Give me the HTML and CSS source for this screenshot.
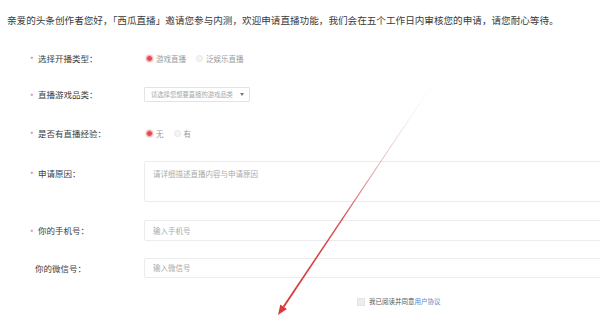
FILE: index.html
```html
<!DOCTYPE html>
<html lang="zh">
<head>
<meta charset="utf-8">
<link rel="stylesheet" href="styles.css">
</head>
<body>
<div class="page">
  <p class="intro">亲爱的头条创作者您好，「西瓜直播」邀请您参与内测，欢迎申请直播功能，我们会在五个工作日内审核您的申请，请您耐心等待。</p>
  <div class="form">
    <div class="row r1">
      <div class="label"><span class="req">*</span>选择开播类型：</div>
      <div class="field radios">
        <span class="radio on"></span><span class="opt">游戏直播</span>
        <span class="radio"></span><span class="opt">泛娱乐直播</span>
      </div>
    </div>
    <div class="row r2">
      <div class="label"><span class="req">*</span>直播游戏品类：</div>
      <div class="field">
        <div class="select"><span class="ph-small">请选择您想要直播的游戏品类</span><span class="caret"></span></div>
      </div>
    </div>
    <div class="row r3">
      <div class="label"><span class="req">*</span>是否有直播经验：</div>
      <div class="field radios">
        <span class="radio on"></span><span class="opt">无</span>
        <span class="radio"></span><span class="opt">有</span>
      </div>
    </div>
    <div class="row r4">
      <div class="label top"><span class="req">*</span>申请原因：</div>
      <div class="field">
        <div class="textarea"><span class="ph">请详细描述直播内容与申请原因</span></div>
      </div>
    </div>
    <div class="row r5">
      <div class="label"><span class="req">*</span>你的手机号：</div>
      <div class="field"><div class="input"><span class="ph">输入手机号</span></div></div>
    </div>
    <div class="row r6">
      <div class="label plain">你的微信号：</div>
      <div class="field"><div class="input"><span class="ph">输入微信号</span></div></div>
    </div>
    <div class="agree">
      <span class="check"></span><span class="agree-text">我已阅读并同意<span class="link">用户协议</span></span>
    </div>
  </div>
  <svg class="arrow" width="600" height="316" viewBox="0 0 600 316">
    <defs>
      <linearGradient id="g" gradientUnits="userSpaceOnUse" x1="430" y1="88" x2="283" y2="307">
        <stop offset="0" stop-color="#e8c8cc" stop-opacity="0.2"/>
        <stop offset="0.3" stop-color="#d88a8e" stop-opacity="0.6"/>
        <stop offset="0.6" stop-color="#d9474b"/>
        <stop offset="1" stop-color="#d63a3d"/>
      </linearGradient>
    </defs>
    <polygon points="430.2,88.1 429.8,87.9 282.8,306.2 284.4,307.2" fill="url(#g)"/>
    <polygon points="278,315 280.3,304.5 286.9,308.9" fill="#d63a3d"/>
  </svg>
</div>
</body>
</html>
```
FILE: styles.css
```css
html, body {
  margin: 0;
  padding: 0;
  background: #fff;
  overflow: hidden;
}
.page {
  position: relative;
  width: 600px;
  height: 316px;
  font-family: "Noto Sans CJK SC", "Noto Sans", sans-serif;
  font-size: 8px;
  line-height: 1.2;
  color: #444;
  overflow: hidden;
}
.intro {
  margin: 0;
  padding: 13px 0 0 7px;
  font-size: 9.6px;
  line-height: 14px;
  white-space: nowrap;
  color: #3a3a3a;
}
.form {
  display: flex;
  flex-direction: column;
}
.row {
  display: flex;
  align-items: center;
}
.label {
  width: 144px;
  flex: none;
  box-sizing: border-box;
  padding-left: 30px;
  font-size: 8.5px;
  color: #404040;
  white-space: nowrap;
  display: flex;
  align-items: center;
}
.label.plain { padding-left: 35px; }
.label.top { align-self: flex-start; padding-top: 7px; }
.req {
  display: inline-block;
  width: 8px;
  color: #e06a6d;
  font-size: 8px;
  line-height: 1;
  position: relative;
  top: 2px;
}
.field {
  flex: 1;
  display: flex;
  align-items: center;
}
.r1 { margin-top: 21px; height: 20px; }
.r2 { margin-top: 19px; height: 15px; }
.r3 { margin-top: 22px; height: 18px; }
.r4 { margin-top: 19px; height: 41px; align-items: flex-start; }
.r5 { margin-top: 18px; height: 21px; }
.r6 { margin-top: 17px; height: 20px; }
.radio {
  width: 5px;
  height: 5px;
  border-radius: 50%;
  border: 1px solid #e6e6e6;
  background: #f4f4f4;
  margin: 0 3px 0 2px;
  box-sizing: content-box;
}
.radio.on {
  background: #e14a4f;
  border: 1px solid #f4b9bb;
  box-shadow: 0 0 0 1px #fbe1e2;
}
.opt {
  font-size: 7.5px;
  color: #9a9a9a;
  margin-right: 8px;
}
.select {
  width: 106px;
  height: 15px;
  box-sizing: border-box;
  border: 1px solid #e3e3e3;
  border-radius: 1px;
  display: flex;
  align-items: center;
  justify-content: space-between;
  padding: 0 5px 0 6px;
}
.ph-small {
  font-size: 6.3px;
  color: #a8a8a8;
  white-space: nowrap;
}
.caret {
  width: 0;
  height: 0;
  border-left: 2.5px solid transparent;
  border-right: 2.5px solid transparent;
  border-top: 3px solid #777;
}
.textarea, .input {
  width: 470px;
  box-sizing: border-box;
  border: 1px solid #ececec;
  border-radius: 2px;
  padding-left: 8px;
}
.textarea {
  height: 41px;
  padding-top: 7px;
  display: flex;
  align-items: flex-start;
}
.input {
  height: 100%;
  display: flex;
  align-items: center;
}
.r5 .field, .r6 .field { align-self: stretch; }
.ph {
  font-size: 7.5px;
  line-height: 10px;
  color: #ababab;
  white-space: nowrap;
}
.agree {
  margin-top: 18px;
  height: 12px;
  display: flex;
  align-items: center;
  padding-left: 357px;
}
.check {
  width: 6px;
  height: 6px;
  background: #ededed;
  border: 1px solid #e4e4e4;
  margin-right: 4px;
}
.agree-text {
  font-size: 6.5px;
  color: #555;
  white-space: nowrap;
}
.link { color: #5b7fc8; }
.arrow {
  position: absolute;
  left: 0;
  top: 0;
  pointer-events: none;
}
```
